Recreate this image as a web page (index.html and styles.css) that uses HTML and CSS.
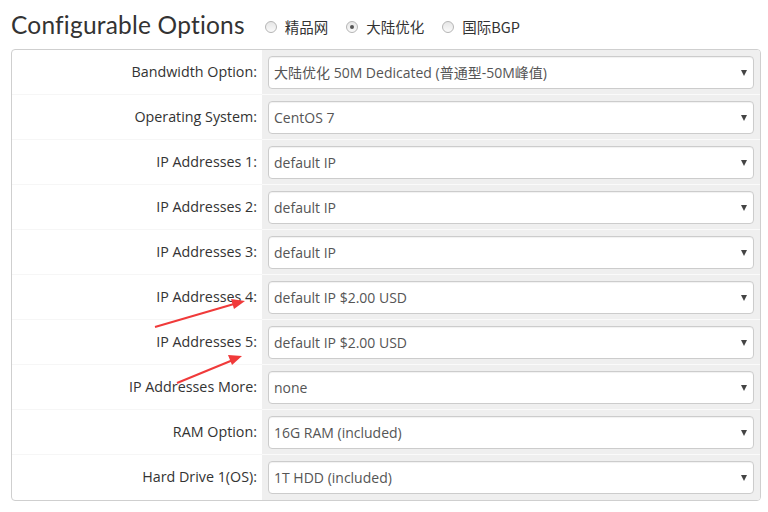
FILE: index.html
```html
<!DOCTYPE html>
<html>
<head>
<meta charset="utf-8">
<link rel="stylesheet" href="styles.css">
</head>
<body>
<div class="page">
  <div class="head">
    <h1 class="title">Configurable Options</h1>
    <label class="radio"><span class="dot"></span><span class="rtext">精品网</span></label>
    <label class="radio"><span class="dot checked"></span><span class="rtext">大陆优化</span></label>
    <label class="radio"><span class="dot"></span><span class="rtext">国际BGP</span></label>
  </div>
  <div class="panel">
    <div class="row"><div class="label">Bandwidth Option:</div><div class="field"><div class="select">大陆优化 50M Dedicated (普通型-50M峰值)</div></div></div>
    <div class="row"><div class="label">Operating System:</div><div class="field"><div class="select">CentOS 7</div></div></div>
    <div class="row"><div class="label">IP Addresses 1:</div><div class="field"><div class="select">default IP</div></div></div>
    <div class="row"><div class="label">IP Addresses 2:</div><div class="field"><div class="select">default IP</div></div></div>
    <div class="row"><div class="label">IP Addresses 3:</div><div class="field"><div class="select">default IP</div></div></div>
    <div class="row"><div class="label">IP Addresses 4:</div><div class="field"><div class="select">default IP $2.00 USD</div></div></div>
    <div class="row"><div class="label">IP Addresses 5:</div><div class="field"><div class="select">default IP $2.00 USD</div></div></div>
    <div class="row"><div class="label">IP Addresses More:</div><div class="field"><div class="select">none</div></div></div>
    <div class="row"><div class="label">RAM Option:</div><div class="field"><div class="select">16G RAM (included)</div></div></div>
    <div class="row last"><div class="label">Hard Drive 1(OS):</div><div class="field"><div class="select">1T HDD (included)</div></div></div>
  </div>
</div>
<svg class="arrows" width="768" height="512" viewBox="0 0 768 512">
  <line x1="155" y1="327" x2="234" y2="304" stroke="#f03a3a" stroke-width="2"/>
  <polygon points="245,301 231,299 234,309" fill="#f03a3a"/>
  <line x1="177" y1="383" x2="233" y2="360" stroke="#f03a3a" stroke-width="2"/>
  <polygon points="242,356 228,355 232,365" fill="#f03a3a"/>
</svg>
</body>
</html>
```
FILE: styles.css
```css
html, body { margin: 0; padding: 0; background: #fff; }
body { width: 768px; height: 512px; overflow: hidden; position: relative; font-family: "Open Sans", "Noto Sans CJK SC", sans-serif; }
.page { padding: 0 7px 0 11px; }
.head { display: flex; align-items: center; height: 49px; }
.title { margin: 0 20px 0 0; font-family: Lato, "Open Sans", sans-serif; font-weight: 400; font-size: 24.5px; color: #333; letter-spacing: 0.2px; }
.radio { display: flex; align-items: center; margin-right: 18px; font-size: 14.5px; color: #333; font-family: "Noto Sans CJK SC", "Open Sans", sans-serif; margin-top: 4px; }
.dot { width: 10px; height: 10px; border-radius: 50%; border: 1px solid #b5b5b5; background: linear-gradient(#e6e6e6, #fafafa); margin-right: 8px; position: relative; box-sizing: content-box; }
.dot.checked::after { content: ""; position: absolute; left: 3px; top: 3px; width: 4px; height: 4px; border-radius: 50%; background: #555; }
.rtext { line-height: 20px; }
.panel { border: 1px solid #cfcfcf; border-radius: 4px; overflow: hidden; }
.row { display: flex; height: 45px; }
.label { width: 250px; border-bottom: 1px solid #f6f6f6; text-align: right; padding-right: 5px; font-size: 14.3px; color: #333; line-height: 44px; box-sizing: border-box; white-space: nowrap; }
.field { flex: 1; background: #efefef; border-bottom: 1px solid #fafafa; padding: 6px 6px 0 6px; box-sizing: border-box; }
.row.last .label, .row.last .field { border-bottom: none; }
.select { height: 33px; box-sizing: border-box; border: 1px solid #ccc; border-radius: 4px; background: #fff; box-shadow: inset 0 1px 1px rgba(0,0,0,0.06); padding: 0 24px 0 5px; font-size: 14px; color: #555; line-height: 31px; position: relative; white-space: nowrap; font-family: "Open Sans", "Noto Sans CJK SC", sans-serif; }
.select::after { content: ""; position: absolute; right: 6px; top: 13px; border-left: 3.5px solid transparent; border-right: 3.5px solid transparent; border-top: 6px solid #444; }
.arrows { position: absolute; left: 0; top: 0; pointer-events: none; }
```
